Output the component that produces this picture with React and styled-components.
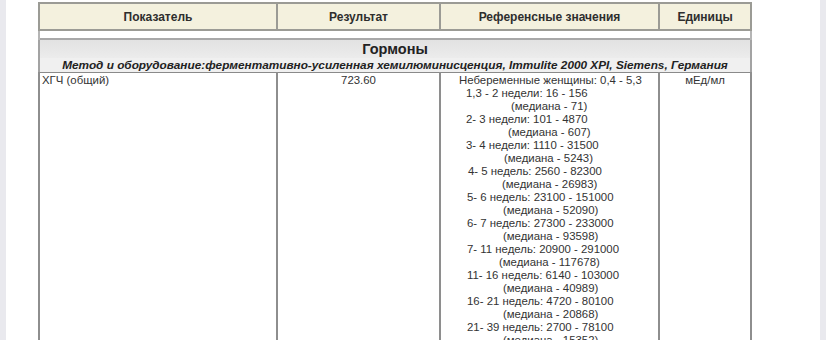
import React from "react";
import styled, { createGlobalStyle } from "styled-components";

const Global = createGlobalStyle`
  html, body { margin: 0; padding: 0; background: #e9e9ee; }
  body { font-family: "Liberation Sans", Arial, sans-serif; color: #333; }
`;

const Page = styled.div`
  margin: 0 6px;
  height: 340px;
  overflow: hidden;
  background: #fff;
  padding: 2px 0 0 32px;
  box-sizing: border-box;
`;

const Table = styled.table`
  width: 712px;
  table-layout: fixed;
  border-collapse: collapse;
  border: 2px solid #a3a3a3;
`;

const HeadCell = styled.th`
  height: 25px;
  background: #f4f1de;
  border: 2px solid #9b9b95;
  font-size: 12px;
  font-weight: bold;
  color: #2e2e2e;
  text-align: center;
  padding: 0;
`;

const GapCell = styled.td`
  height: 7px;
  padding: 0;
  border-left: 2px solid #b5b5b5;
  border-right: 2px solid #b5b5b5;
`;

const GroupCell = styled.td`
  height: 18px;
  padding: 0;
  background: linear-gradient(#e2e2e2, #ececec);
  border-top: 2px solid #a8a8a8;
  font-size: 14.5px;
  font-weight: bold;
  color: #222;
  text-align: center;
  line-height: 18px;
`;

const MethodCell = styled.td`
  height: 14px;
  padding: 0;
  background: #f0f0f0;
  border-bottom: 1px solid #8a8a8a;
  font-size: 11.8px;
  font-weight: bold;
  font-style: italic;
  color: #222;
  text-align: center;
  line-height: 14px;
  white-space: nowrap;
`;

const DataCell = styled.td`
  vertical-align: top;
  padding: 1px 2px 0 2px;
  font-size: 11.4px;
  line-height: 13px;
  color: #333;
  text-align: ${(p) => p.$align || "left"};
  border-left: 2px solid #8e8e8e;
  border-right: 2px solid #8e8e8e;
`;

const RefLine = styled.div`
  padding-left: ${(p) => p.$indent}px;
  white-space: nowrap;
  text-align: left;
`;

const refs = [
  ["Небеременные женщины: 0,4 - 5,3", 16],
  ["1,3 - 2 недели: 16 - 156", 23],
  ["(медиана - 71)", 68],
  ["2- 3 недели: 101 - 4870", 23],
  ["(медиана - 607)", 65],
  ["3- 4 недели: 1110 - 31500", 23],
  ["(медиана - 5243)", 61],
  ["4- 5 недель: 2560 - 82300", 25],
  ["(медиана - 26983)", 59],
  ["5- 6 недель: 23100 - 151000", 24],
  ["(медиана - 52090)", 60],
  ["6- 7 недель: 27300 - 233000", 24],
  ["(медиана - 93598)", 60],
  ["7- 11 недель: 20900 - 291000", 24],
  ["(медиана - 117678)", 56],
  ["11- 16 недель: 6140 - 103000", 24],
  ["(медиана - 40989)", 60],
  ["16- 21 недель: 4720 - 80100", 24],
  ["(медиана - 20868)", 60],
  ["21- 39 недель: 2700 - 78100", 24],
  ["(медиана - 15352)", 60],
];

export default function App() {
  return (
    <>
      <Global />
      <Page>
        <Table>
          <colgroup>
            <col style={{ width: 238 }} />
            <col style={{ width: 163 }} />
            <col style={{ width: 219 }} />
            <col style={{ width: 92 }} />
          </colgroup>
          <thead>
            <tr>
              <HeadCell>Показатель</HeadCell>
              <HeadCell>Результат</HeadCell>
              <HeadCell>Референсные значения</HeadCell>
              <HeadCell>Единицы</HeadCell>
            </tr>
          </thead>
          <tbody>
            <tr>
              <GapCell colSpan={4} />
            </tr>
            <tr>
              <GroupCell colSpan={4}>Гормоны</GroupCell>
            </tr>
            <tr>
              <MethodCell colSpan={4}>
                Метод и оборудование:ферментативно-усиленная хемилюминисценция, Immulite 2000 XPI, Siemens, Германия
              </MethodCell>
            </tr>
            <tr>
              <DataCell>ХГЧ (общий)</DataCell>
              <DataCell $align="center">723.60</DataCell>
              <DataCell>
                {refs.map(([t, i]) => (
                  <RefLine key={t} $indent={i}>{t}</RefLine>
                ))}
              </DataCell>
              <DataCell $align="center">мЕд/мл</DataCell>
            </tr>
          </tbody>
        </Table>
      </Page>
    </>
  );
}
